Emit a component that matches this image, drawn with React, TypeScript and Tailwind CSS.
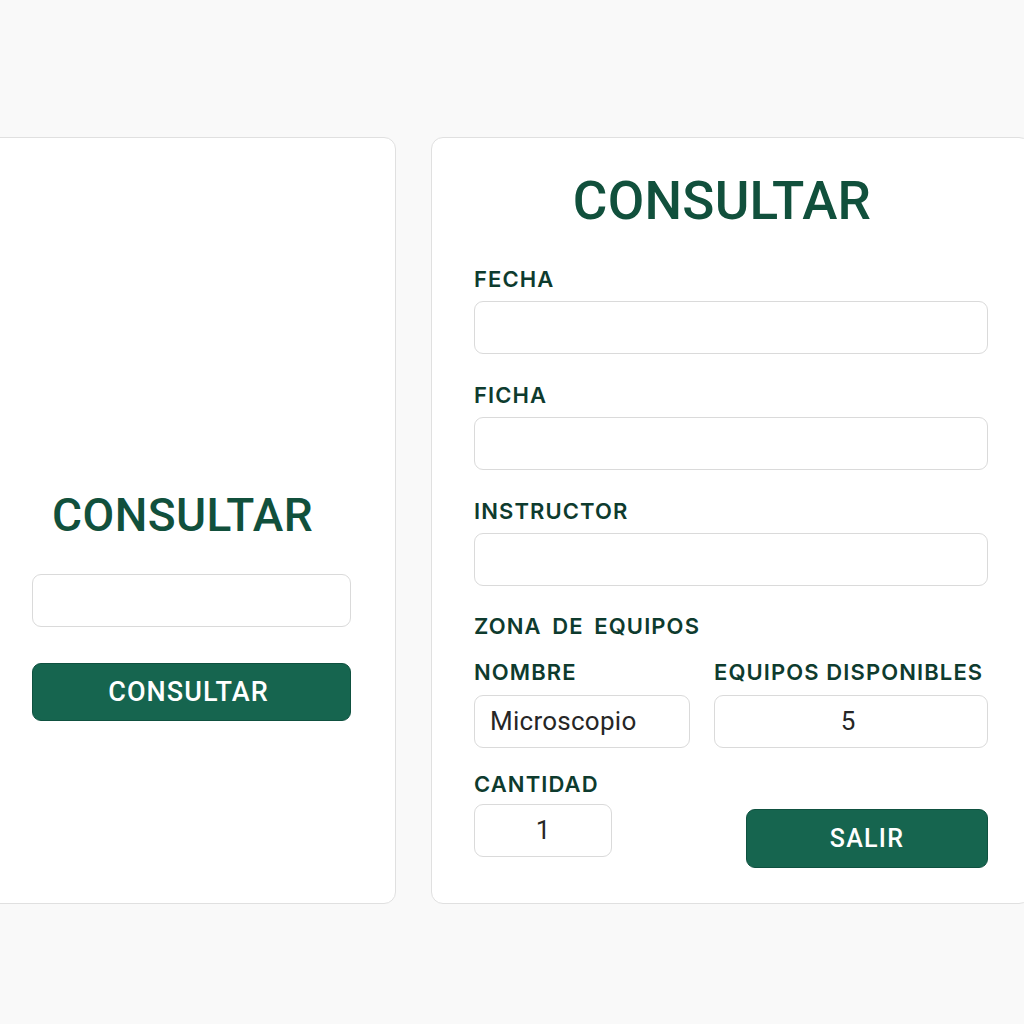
import React from "react";

const font = { fontFamily: "Roboto, 'Noto Sans', sans-serif" };
const labelFont = { fontFamily: "Inter, 'Noto Sans', sans-serif" };

function Label({ children, className = "" }: { children: React.ReactNode; className?: string }) {
  return (
    <div
      style={labelFont}
      className={"text-[22px] leading-[28px] font-semibold tracking-[0.05em] text-[#0e3b2e] " + className}
    >
      {children}
    </div>
  );
}

function Field({ className = "", children }: { className?: string; children?: React.ReactNode }) {
  return (
    <div
      className={
        "h-[53px] rounded-[9px] border border-[#dadada] bg-white flex items-center text-[26px] text-[#262626] " +
        className
      }
    >
      {children}
    </div>
  );
}

export default function App() {
  return (
    <div style={font} className="w-[1024px] h-[1024px] overflow-hidden bg-[#f9f9f9] pt-[137px]">
      <div className="flex gap-[35px] -ml-[14px]">
        {/* Left card */}
        <div className="w-[410px] h-[767px] shrink-0 rounded-[12px] border border-[#e0e0e0] bg-white pl-[45px] pr-[44px] pt-[354px] flex flex-col">
          <div className="ml-[20px] text-[46px] leading-[46px] font-medium tracking-[0.01em] text-[#11503c]">
            CONSULTAR
          </div>
          <Field className="mt-[36px]" />
          <div className="mt-[36px] h-[58px] rounded-[9px] bg-[#16654f] border border-[#0f5140] flex items-center justify-center text-white text-[27px] font-medium tracking-[0.04em] pr-[6px]">
            CONSULTAR
          </div>
        </div>

        {/* Right card */}
        <div className="w-[600px] h-[767px] shrink-0 rounded-[12px] border border-[#e0e0e0] bg-white pl-[42px] pr-[42px] pt-[36px] flex flex-col">
          <div className="w-[514px] pr-[18px] text-center text-[53px] leading-[54px] font-medium tracking-[0.005em] text-[#11503c]">
            CONSULTAR
          </div>
          <div className="w-[514px] mt-[37px] flex flex-col">
            <Label>FECHA</Label>
            <Field className="mt-[8px]" />
            <Label className="mt-[27px]">FICHA</Label>
            <Field className="mt-[8px]" />
            <Label className="mt-[27px]">INSTRUCTOR</Label>
            <Field className="mt-[8px]" />
            <Label className="mt-[26px] font-medium [word-spacing:4px]">ZONA DE EQUIPOS</Label>
            <div className="mt-[18px] flex gap-[24px]">
              <div className="w-[216px] flex flex-col">
                <Label>NOMBRE</Label>
                <Field className="mt-[9px] pl-[15px] tracking-[0.01em]">Microscopio</Field>
              </div>
              <div className="flex-1 flex flex-col">
                <Label className="tracking-[0.03em] whitespace-nowrap">EQUIPOS DISPONIBLES</Label>
                <Field className="mt-[9px] justify-center pr-[6px]">5</Field>
              </div>
            </div>
            <Label className="mt-[22px]">CANTIDAD</Label>
            <div className="mt-[6px] flex items-start justify-between">
              <Field className="w-[138px] justify-center">1</Field>
              <div className="mt-[5px] w-[242px] h-[59px] rounded-[9px] bg-[#16654f] border border-[#0f5140] flex items-center justify-center text-white text-[25px] font-medium tracking-[0.05em]">
                SALIR
              </div>
            </div>
          </div>
        </div>
      </div>
    </div>
  );
}
